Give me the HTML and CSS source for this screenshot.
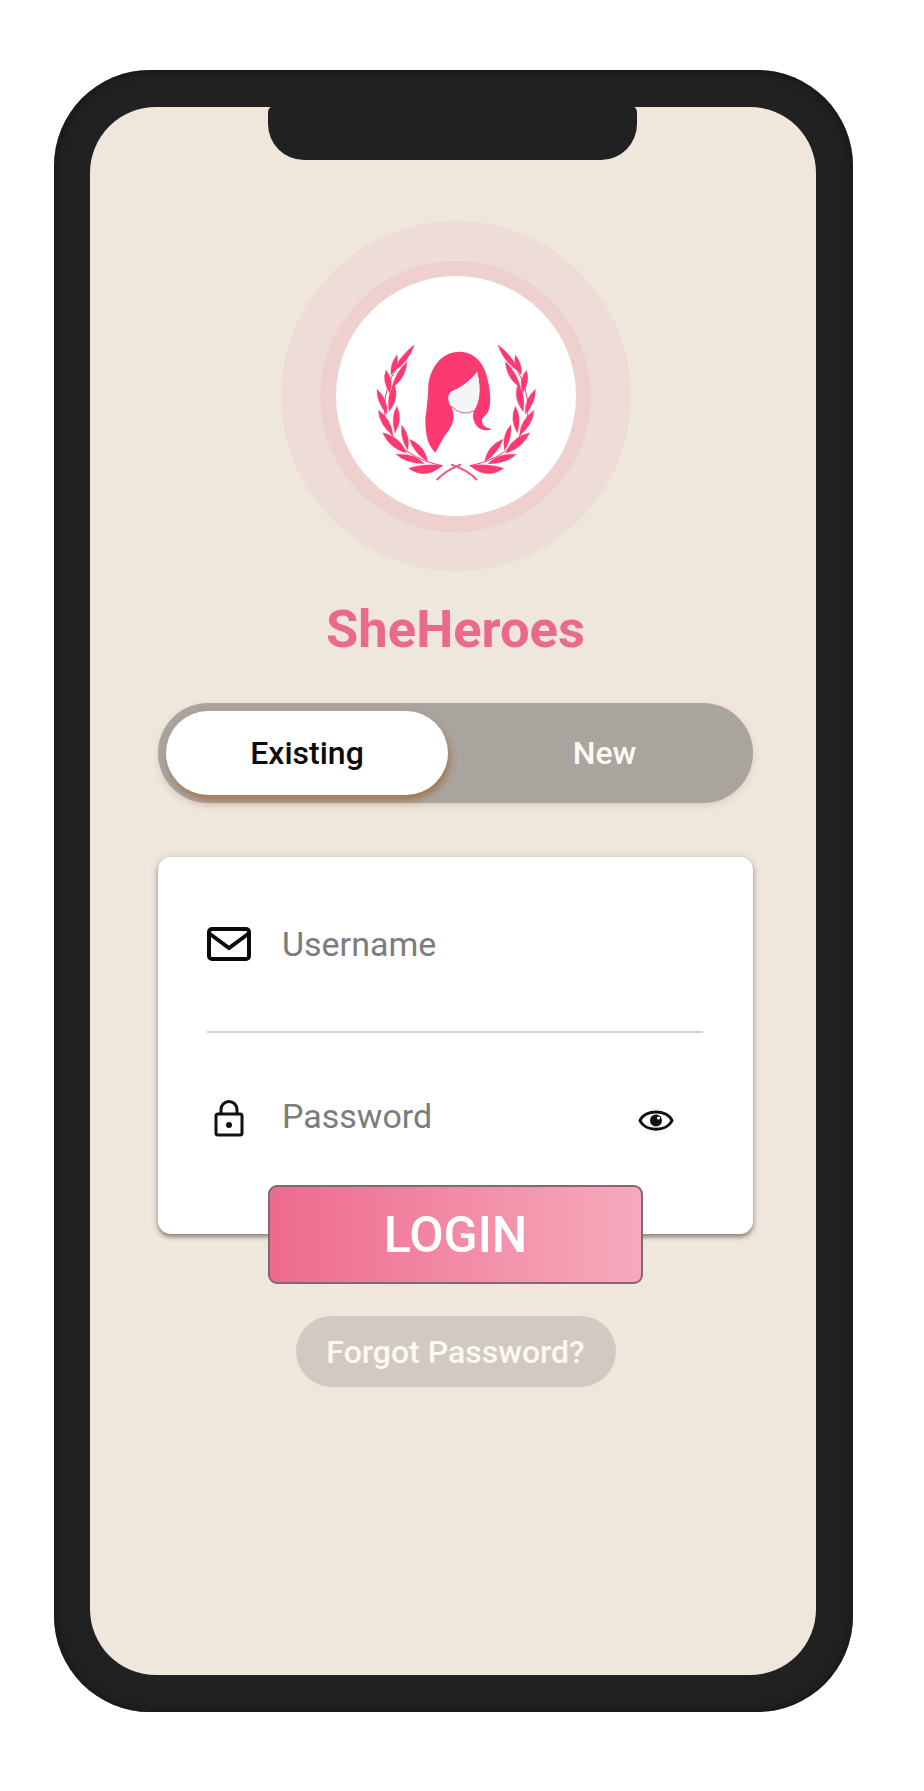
FILE: index.html
```html
<!DOCTYPE html>
<html lang="en">
<head>
<meta charset="utf-8">
<title>SheHeroes</title>
<link rel="stylesheet" href="styles.css">
</head>
<body>
<div class="phone">
  <div class="notch"></div>
  <main class="screen">
    <div class="ring-outer">
      <div class="ring-mid">
        <div class="ring-core">
          <svg class="logo" viewBox="0 0 720 720" aria-label="SheHeroes logo">
            <defs>
              <g id="branch" class="branch">
                <path class="stem" d="M128 44C72 100 40 170 40 235C42 320 110 385 215 404"/>
                <path d="M60 132Q56 98 78 72Q86 104 60 132Z"/>
                <path d="M64 124Q88 72 130 42Q112 96 64 124Z"/>
                <path d="M56 186Q32 150 45 118Q70 148 56 186Z"/>
                <path d="M62 170Q76 120 108 92Q104 144 62 170Z"/>
                <path d="M48 250Q16 214 18 175Q52 204 48 250Z"/>
                <path d="M54 242Q46 190 70 160Q86 202 54 242Z"/>
                <path d="M66 314Q24 280 22 238Q62 266 66 314Z"/>
                <path d="M72 306Q58 258 78 226Q96 266 72 306Z"/>
                <path d="M106 366Q56 352 35 305Q90 318 106 366Z"/>
                <path d="M110 358Q86 318 92 282Q120 316 110 358Z"/>
                <path d="M160 398Q104 398 75 370Q130 366 160 398Z"/>
                <path d="M170 392Q130 368 115 325Q162 344 170 392Z"/>
                <path d="M215 404Q160 396 113 412Q160 448 215 404Z"/>
              </g>
            </defs>
            <g transform="translate(105 165)" class="logo-ink">
              <use href="#branch"/>
              <use href="#branch" transform="translate(511 0) scale(-1 1)"/>
              <path class="ribbon" d="M197 447Q224 418 270 400M318 447Q292 418 240 400"/>
              <path d="M193 365C175 345 163 325 163 262C168 225 172 190 172 160C180 105 215 62 265 62C315 62 345 105 352 155C360 190 360 225 350 245C340 258 328 262 335 278C340 288 352 292 362 293C350 302 325 298 315 282C305 268 305 252 308 240C325 215 332 175 318 122C300 150 265 172 240 182C228 195 232 215 240 225C252 250 250 275 232 300C215 320 205 345 193 365Z"/>
              <path class="face" d="M318 122C300 150 265 172 240 182C228 195 232 215 240 225Q272 258 308 240C325 215 332 175 318 122Z"/>
              <path class="chin" d="M240 225Q272 258 308 240"/>
            </g>
          </svg>
        </div>
      </div>
    </div>

    <h1 class="brand">SheHeroes</h1>

    <div class="toggle">
      <div class="toggle-on">Existing</div>
      <div class="toggle-off">New</div>
    </div>

    <section class="card">
      <div class="field field-user">
        <svg class="icon-mail" viewBox="0 0 44 34">
          <rect x="2" y="2" width="40" height="30" rx="3"/>
          <path d="M3 7L22 21L41 7"/>
        </svg>
        <span class="placeholder">Username</span>
      </div>
      <div class="rule"></div>
      <div class="field field-pass">
        <span class="lock-slot">
          <svg class="icon-lock" viewBox="0 0 30 37">
            <rect x="2" y="14" width="26" height="21" rx="2"/>
            <path d="M7 14V9.500A8 8 0 0 1 23 9.500V14"/>
            <circle class="dot" cx="15" cy="25" r="3"/>
          </svg>
        </span>
        <span class="placeholder placeholder-pass">Password</span>
        <svg class="icon-eye" viewBox="0 0 36 25">
          <path d="M2 12.500C7 1 29 1 34 12.500C29 24 7 24 2 12.500Z"/>
          <circle class="dot" cx="18" cy="12.500" r="6"/>
          <circle class="glint" cx="20.500" cy="10" r="1.600"/>
        </svg>
      </div>
    </section>

    <button class="login" type="button">LOGIN</button>
    <button class="forgot" type="button">Forgot Password?</button>
  </main>
</div>
</body>
</html>
```
FILE: styles.css
```css
* { box-sizing: border-box; }

html, body {
  margin: 0;
  padding: 0;
  background: #ffffff;
}

body {
  width: 924px;
  height: 1791px;
  padding: 70px 71px 0 54px;
  font-family: Roboto, "Liberation Sans", sans-serif;
  overflow: hidden;
}

.phone {
  position: relative;
  width: 799px;
  height: 1642px;
  padding: 37px 37px 37px 36px;
  border-radius: 96px;
  background: #212121;
  box-shadow: inset 0 0 10px #111111;
}

.notch {
  position: absolute;
  left: 214px;
  top: 36px;
  width: 369px;
  height: 54px;
  border-radius: 6px 6px 36px 36px;
  background: #212121;
}

.screen {
  display: flex;
  flex-direction: column;
  align-items: center;
  height: 100%;
  padding: 114px 63px 0 68px;
  border-radius: 66px;
  background: #efe6dc;
}

.ring-outer,
.ring-mid,
.ring-core {
  display: flex;
  align-items: center;
  justify-content: center;
  border-radius: 50%;
}

.ring-outer {
  flex: none;
  width: 350px;
  height: 350px;
  background: #eedcd6;
}

.ring-mid {
  width: 271px;
  height: 271px;
  background: #eed0ce;
}

.ring-core {
  width: 240px;
  height: 240px;
  background: #ffffff;
}

.logo {
  display: block;
  width: 240px;
  height: 240px;
}

.logo-ink { fill: #fb3a72; }

.branch path {
  stroke: #fb3a72;
  stroke-width: 1;
}

.branch .stem {
  fill: none;
  stroke-width: 3;
}

.ribbon {
  fill: none;
  stroke: #f0557f;
  stroke-width: 6;
}

.chin {
  fill: none;
  stroke: #f0557f;
  stroke-width: 3;
}

.face { fill: #f3f6f5; }

.brand {
  margin: 29px 0 0;
  font-size: 52.500px;
  line-height: 58px;
  font-weight: 700;
  color: #ea6a8d;
}

.toggle {
  display: flex;
  align-items: center;
  width: 100%;
  height: 100px;
  margin-top: 45px;
  padding: 0 8px;
  border-radius: 50px;
  background: #aaa49e;
  box-shadow: 0 3px 6px rgba(150, 120, 90, 0.2);
}

.toggle-on,
.toggle-off {
  display: flex;
  align-items: center;
  justify-content: center;
  font-size: 32px;
  font-weight: 500;
}

.toggle-on {
  width: 282px;
  height: 84px;
  border-radius: 42px;
  background: #ffffff;
  color: #0c0c0c;
  box-shadow: 2px 5px 7px rgba(160, 105, 60, 0.75);
}

.toggle-off {
  flex: 1;
  padding-left: 16px;
  color: #fdfaf5;
}

.card {
  width: 100%;
  height: 377px;
  margin-top: 54px;
  padding: 0 50px 0 49px;
  border-radius: 13px;
  background: #ffffff;
  box-shadow: 0 3px 4px rgba(60, 50, 40, 0.5), 0 0 8px rgba(120, 100, 80, 0.18);
}

.field {
  display: flex;
  align-items: center;
}

.field-user {
  height: 174px;
  gap: 31px;
}

.field-pass {
  height: 171px;
}

.placeholder {
  font-size: 34px;
  line-height: 38px;
  color: #7c7c7c;
}

.placeholder-pass {
  flex: 1;
  margin: 0 0 6px 31px;
}

.rule {
  height: 2px;
  background: #d2d2d2;
}

.icon-mail {
  flex: none;
  width: 44px;
  height: 34px;
  fill: none;
  stroke: #0a0a0a;
  stroke-width: 4;
}

.lock-slot {
  display: flex;
  flex: none;
  justify-content: center;
  width: 44px;
}

.icon-lock {
  width: 30px;
  height: 37px;
  fill: none;
  stroke: #111111;
  stroke-width: 3;
}

.icon-eye {
  flex: none;
  width: 36px;
  height: 25px;
  margin: 4px 29px 0 0;
  fill: none;
  stroke: #111111;
  stroke-width: 3;
}

.dot {
  fill: #111111;
  stroke: none;
}

.glint {
  fill: #ffffff;
  stroke: none;
}

.login {
  position: relative;
  display: block;
  width: 375px;
  height: 99px;
  margin: -49px 0 0;
  padding: 0;
  border: 2px solid #84686f;
  border-radius: 9px;
  background: linear-gradient(90deg, #ee6a8e, #f6aabd);
  color: #ffffff;
  font-family: inherit;
  font-size: 50px;
  font-weight: 500;
}

.forgot {
  display: block;
  width: 320px;
  height: 71px;
  margin: 32px 0 0;
  padding: 0;
  border: 0;
  border-radius: 36px;
  background: #d2cac2;
  color: #fcf8f2;
  font-family: inherit;
  font-size: 32px;
  font-weight: 500;
}
```
